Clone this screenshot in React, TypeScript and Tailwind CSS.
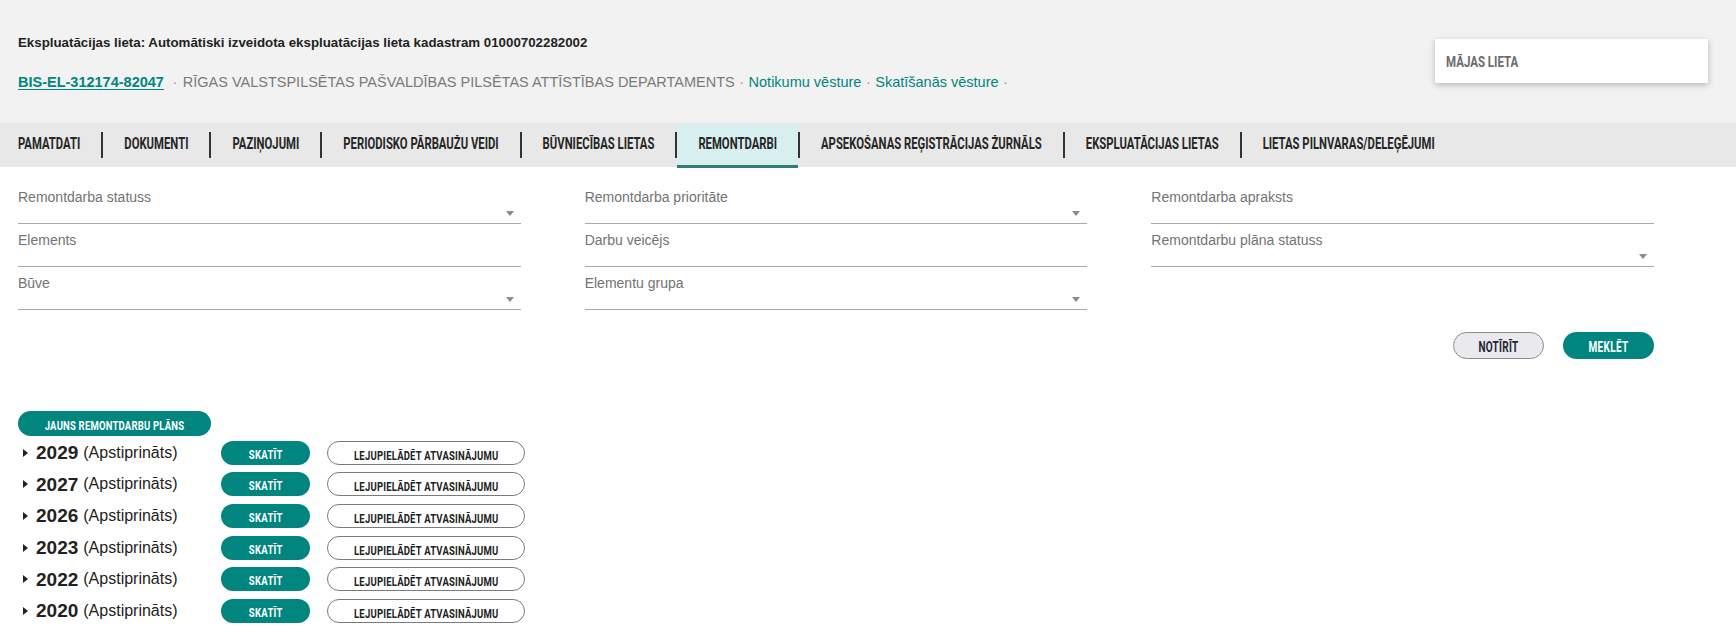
import { useState, type ReactNode } from 'react';

const TABS = [
  'Pamatdati',
  'Dokumenti',
  'Paziņojumi',
  'Periodisko pārbaužu veidi',
  'Būvniecības lietas',
  'Remontdarbi',
  'Apsekošanas reģistrācijas žurnāls',
  'Ekspluatācijas lietas',
  'Lietas pilnvaras/deleģējumi',
];

const PLANS = [2029, 2027, 2026, 2023, 2022, 2020];

// tall, narrow uppercase labels (stand-in for the condensed display face)
function Caps({ children, className = '' }: { children: ReactNode; className?: string }) {
  return (
    <span className={`inline-block font-['Roboto',sans-serif] font-bold uppercase leading-none ${className}`}>
      {children}
    </span>
  );
}

function Field({ label, select }: { label: string; select?: boolean }) {
  return (
    <div className="relative h-[36px] border-b border-[#a9a9a9]">
      <div className="pt-[1px] text-[14px] leading-[16px] text-[#737373]">{label}</div>
      {select && (
        <span className="absolute right-[7px] bottom-[7px] h-0 w-0 border-x-[4px] border-t-[5px] border-x-transparent border-t-[#8a8a8a]" />
      )}
    </div>
  );
}

function Dot() {
  return <span className="mx-[4.5px] text-[#9a9a9a]">·</span>;
}

export default function App() {
  const [active, setActive] = useState('Remontdarbi');

  return (
    <div className="min-h-screen bg-white font-['Liberation_Sans',Arial,sans-serif] text-[#222]">
      <header className="flex h-[123px] justify-between bg-[#f2f2f2] pl-[18px] pr-[28px]">
        <div className="pt-[34px]">
          <div className="text-[13.3px] font-bold leading-[18px] text-[#222]">
            Ekspluatācijas lieta: Automātiski izveidota ekspluatācijas lieta kadastram 01000702282002
          </div>
          <div className="mt-[21px] flex items-center text-[14.5px] leading-[18px]">
            <a className="mr-[4px] font-bold text-[#00857f] underline underline-offset-2">BIS-EL-312174-82047</a>
            <Dot />
            <span className="ml-[1px] text-[#7a7a7a]">RĪGAS VALSTSPILSĒTAS PAŠVALDĪBAS PILSĒTAS ATTĪSTĪBAS DEPARTAMENTS</span>
            <Dot />
            <a className="text-[#00857f]">Notikumu vēsture</a>
            <Dot />
            <a className="text-[#00857f]">Skatīšanās vēsture</a>
            <Dot />
          </div>
        </div>
        <div className="mt-[39px] flex h-[44px] w-[273px] items-center bg-white pl-[11px] pt-[3px] shadow-[0_2px_6px_rgba(0,0,0,0.25)]">
          <Caps className="scale-y-[1.35] text-[11.5px] text-[#6b6b6b]">Mājas lieta</Caps>
        </div>
      </header>

      <nav className="flex h-[44px] items-stretch bg-[#e8e8e8]">
        {TABS.map((t, i) => {
          const on = t === active;
          const prevOn = i > 0 && TABS[i - 1] === active;
          return (
            <div key={t} className="flex items-center">
              {(i > 0 || on) && !prevOn && <span className="h-[26px] w-[2px] bg-[#333]" />}
              <button
                onClick={() => setActive(t)}
                className={`flex h-full items-center text-[#262626] ${i === 0 ? 'pl-[18px] pr-[21px]' : 'px-[21px]'} ${
                  on ? 'mt-[1px] border-b-[3px] border-[#2e7b78] bg-[#d8eff0] pt-[2px]' : ''
                }`}
              >
                <Caps className="scale-y-[1.4] text-[11.3px]">{t}</Caps>
              </button>
              {on && <span className="h-[26px] w-[2px] bg-[#333]" />}
            </div>
          );
        })}
      </nav>

      <section className="pl-[18px] pr-[82px] pt-[21px]">
        <div className="grid grid-cols-3 gap-x-[64px]">
          <div className="flex flex-col gap-[7px]">
            <Field label="Remontdarba statuss" select />
            <Field label="Elements" />
            <Field label="Būve" select />
          </div>
          <div className="flex flex-col gap-[7px]">
            <Field label="Remontdarba prioritāte" select />
            <Field label="Darbu veicējs" />
            <Field label="Elementu grupa" select />
          </div>
          <div className="flex flex-col gap-[7px]">
            <Field label="Remontdarba apraksts" />
            <Field label="Remontdarbu plāna statuss" select />
          </div>
        </div>

        <div className="mt-[22px] flex justify-end gap-[19px]">
          <button className="h-[27px] w-[91px] rounded-full border border-[#8c8c8c] bg-[#e9e9ee] text-[#1f2430]">
            <Caps className="scale-y-[1.4] text-[10px] tracking-[0.3px]">Notīrīt</Caps>
          </button>
          <button className="h-[27px] w-[91px] rounded-full bg-[#00857f] text-white">
            <Caps className="scale-y-[1.4] text-[10px] tracking-[0.3px]">Meklēt</Caps>
          </button>
        </div>

        <button className="mt-[52px] h-[25px] w-[193px] rounded-full bg-[#00857f] text-white">
          <Caps className="scale-y-[1.3] text-[9.5px] tracking-[0.2px]">Jauns remontdarbu plāns</Caps>
        </button>

        <div className="mt-[1px] flex flex-col">
          {PLANS.map((y) => (
            <div key={y} className="flex h-[31.6px] items-center">
              <span className="ml-[5px] mr-[8px] h-0 w-0 border-y-[4px] border-l-[5px] border-y-transparent border-l-[#222]" />
              <span className="text-[19px] font-bold leading-none">{y}</span>
              <span className="ml-[5px] w-[138px] text-[16px] leading-none">(Apstiprināts)</span>
              <button className="h-[24px] w-[89px] rounded-full bg-[#00857f] text-white">
                <Caps className="scale-y-[1.4] text-[9.5px] tracking-[0.3px]">Skatīt</Caps>
              </button>
              <button className="ml-[17px] h-[24px] w-[198px] rounded-full border border-[#7a7a7a] bg-white text-[#222]">
                <Caps className="scale-y-[1.4] text-[9.5px] tracking-[0.2px]">Lejupielādēt atvasinājumu</Caps>
              </button>
            </div>
          ))}
        </div>
      </section>
    </div>
  );
}
